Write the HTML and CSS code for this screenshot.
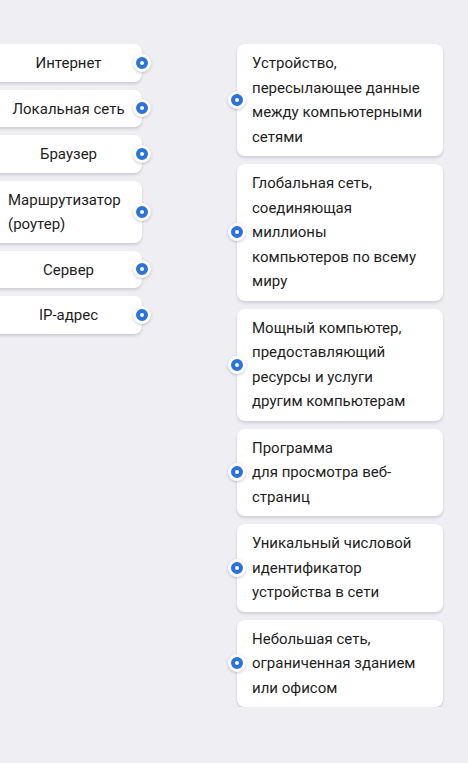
FILE: index.html
```html
<!DOCTYPE html>
<html>
<head>
	<title>Сопоставление терминов</title>
	<meta charset="utf-8">
	<link rel="stylesheet" href="styles.css">
</head>
<body>
	<article class="match">
		<section class="terms">
			<div class="term"><span>Интернет</span><i class="dot"></i></div>
			<div class="term"><span>Локальная сеть</span><i class="dot"></i></div>
			<div class="term"><span>Браузер</span><i class="dot"></i></div>
			<div class="term"><span>Маршрутизатор (роутер)</span><i class="dot"></i></div>
			<div class="term"><span>Сервер</span><i class="dot"></i></div>
			<div class="term"><span>IP-адрес</span><i class="dot"></i></div>
		</section>
		<section class="defs">
			<div class="def"><i class="dot"></i><span>Устройство, пересылающее данные между компьютерными сетями</span></div>
			<div class="def"><i class="dot"></i><span>Глобальная сеть, соединяющая миллионы компьютеров по всему миру</span></div>
			<div class="def"><i class="dot"></i><span>Мощный компьютер, предоставляющий ресурсы и услуги другим компьютерам</span></div>
			<div class="def"><i class="dot"></i><span>Программа для&nbsp;просмотра веб-страниц</span></div>
			<div class="def"><i class="dot"></i><span>Уникальный числовой идентификатор устройства в сети</span></div>
			<div class="def"><i class="dot"></i><span>Небольшая сеть, ограниченная зданием или офисом</span></div>
		</section>
	</article>
</body>
</html>
```

FILE: styles.css
```css
*{
	padding: 0;
	margin: 0;
	box-sizing: border-box;
}
body{
	background: #eeeef3;
	font-family: Roboto, "Noto Sans", sans-serif;
	font-size: 15px;
	line-height: 24.5px;
	color: #1e1e1e;
	overflow: hidden;
}
.match{
	display: flex;
	align-items: flex-start;
	padding-top: 44px;
}
.terms{
	width: 150px;
	margin-left: -8px;
	display: flex;
	flex-direction: column;
	gap: 8px;
}
.defs{
	width: 206px;
	margin-left: 95px;
	display: flex;
	flex-direction: column;
	gap: 8px;
}
.term,
.def{
	position: relative;
	background: #fff;
	border-radius: 8px;
	box-shadow: 0 2px 3px rgba(40, 40, 80, 0.16);
}
.term{
	display: flex;
	justify-content: center;
	padding: 7px 13px 6px 16px;
}
.def{
	padding: 7px 18px 7px 15px;
}
/* точка-коннектор на краю карточки */
.dot{
	position: absolute;
	top: 50%;
	width: 18px;
	height: 18px;
	margin-top: -9px;
	border-radius: 50%;
	background: #fff;
	box-shadow: 0 1px 3px rgba(40, 40, 80, 0.25);
}
.dot::after{
	content: "";
	position: absolute;
	left: 3px;
	top: 3px;
	width: 12px;
	height: 12px;
	box-sizing: border-box;
	border: 4px solid #2a72e0;
	border-radius: 50%;
}
.term .dot{
	right: -9px;
}
.def .dot{
	left: -9px;
}
```
